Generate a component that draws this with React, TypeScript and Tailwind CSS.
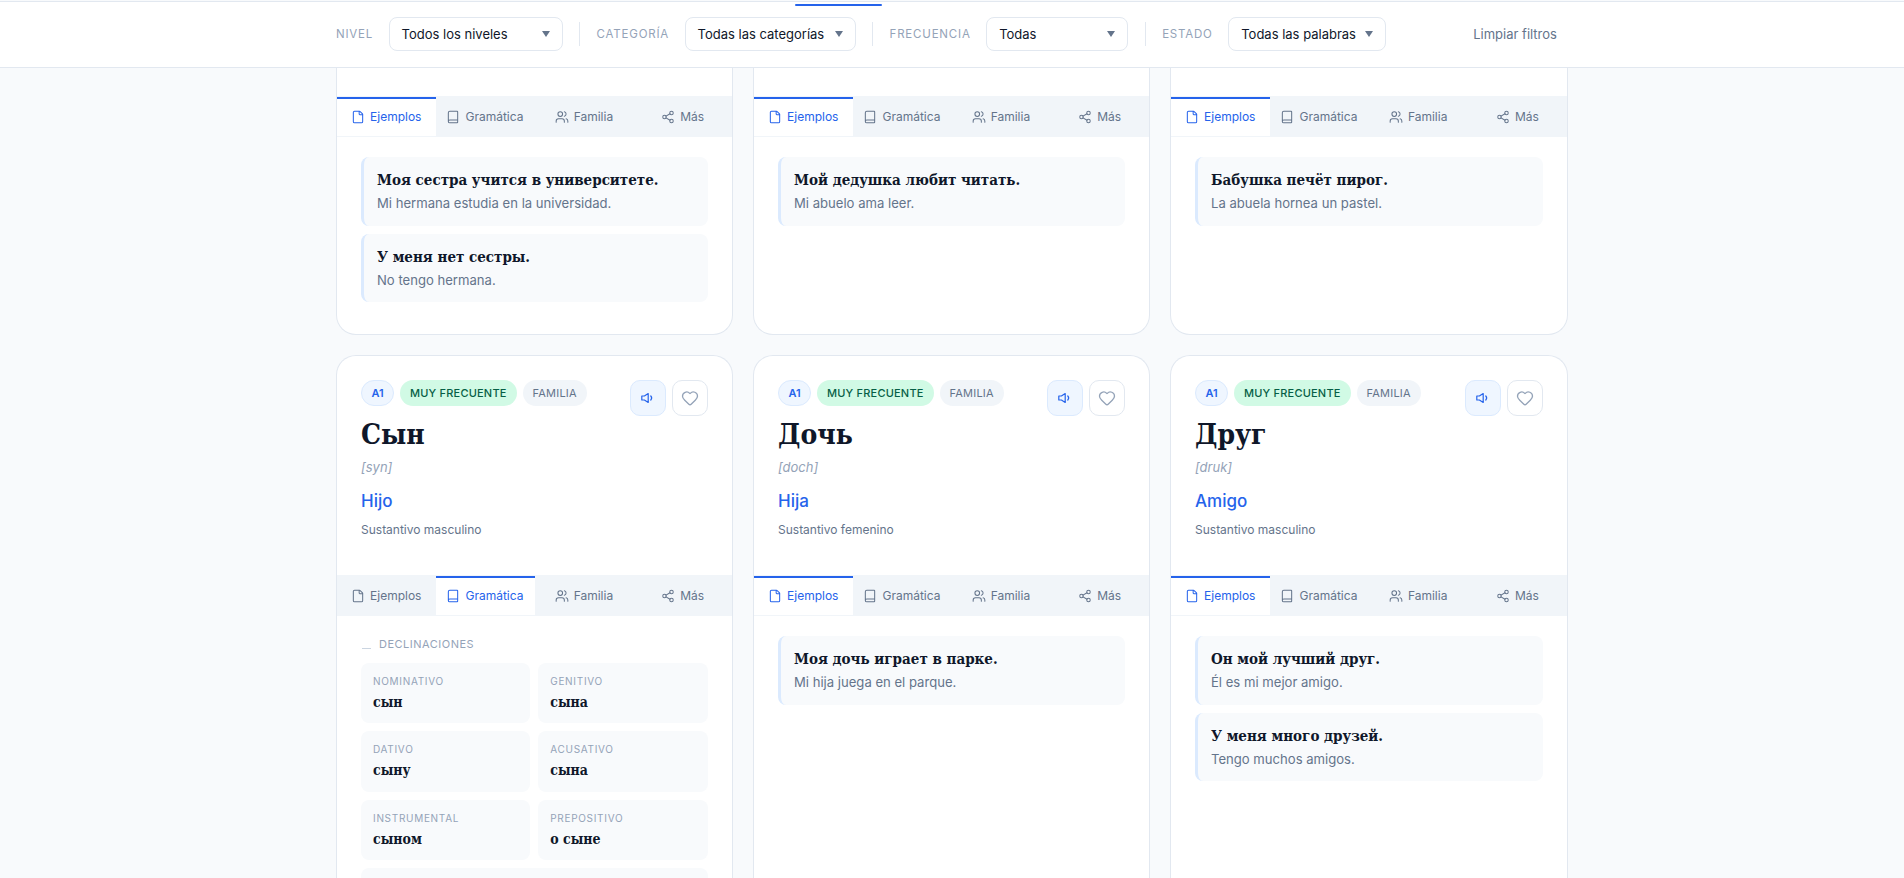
import { Book, File, Heart, Share2, Users } from "lucide-react";

const sans = "font-['Inter','Noto_Sans',sans-serif]";
const serif = "font-['DejaVu_Serif_Condensed','DejaVu_Serif',serif]";

const filters = [
  { label: "Nivel", value: "Todos los niveles", width: "w-[174px]" },
  { label: "Categoría", value: "Todas las categorías", width: "w-[171px]" },
  { label: "Frecuencia", value: "Todas", width: "w-[142px]" },
  { label: "Estado", value: "Todas las palabras", width: "w-[158px]" },
];

const tabs = [
  { name: "Ejemplos", icon: File },
  { name: "Gramática", icon: Book },
  { name: "Familia", icon: Users },
  { name: "Más", icon: Share2 },
];

const topCards = [
  [
    { ru: "Моя сестра учится в университете.", es: "Mi hermana estudia en la universidad." },
    { ru: "У меня нет сестры.", es: "No tengo hermana." },
  ],
  [{ ru: "Мой дедушка любит читать.", es: "Mi abuelo ama leer." }],
  [{ ru: "Бабушка печёт пирог.", es: "La abuela hornea un pastel." }],
];

const words = [
  {
    word: "Сын",
    pron: "[syn]",
    meaning: "Hijo",
    kind: "Sustantivo masculino",
    tab: "Gramática",
    examples: [],
  },
  {
    word: "Дочь",
    pron: "[doch]",
    meaning: "Hija",
    kind: "Sustantivo femenino",
    tab: "Ejemplos",
    examples: [{ ru: "Моя дочь играет в парке.", es: "Mi hija juega en el parque." }],
  },
  {
    word: "Друг",
    pron: "[druk]",
    meaning: "Amigo",
    kind: "Sustantivo masculino",
    tab: "Ejemplos",
    examples: [
      { ru: "Он мой лучший друг.", es: "Él es mi mejor amigo." },
      { ru: "У меня много друзей.", es: "Tengo muchos amigos." },
    ],
  },
];

const cases = [
  ["Nominativo", "сын"],
  ["Genitivo", "сына"],
  ["Dativo", "сыну"],
  ["Acusativo", "сына"],
  ["Instrumental", "сыном"],
  ["Prepositivo", "о сыне"],
];

function SpeakerIcon() {
  return (
    <svg width="14" height="12" viewBox="0 0 14 12" fill="none" stroke="currentColor" strokeWidth="1.2" strokeLinejoin="round" strokeLinecap="round">
      <path d="M0.8 4h2.6L7.2 1.6v8.8L3.4 8H0.8z" />
      <path d="M9.8 4a3 3 0 0 1 0 4" />
    </svg>
  );
}

function FilterBar() {
  return (
    <header className="relative z-10 mt-px h-[67px] shrink-0 border-b border-t border-[#e2e8f0] bg-white">
      <div className="absolute left-[795px] top-[2px] h-[2px] w-[87px] rounded-full bg-[#2563eb]" />
      <div className="ml-[336px] flex h-full items-center pb-px">
        {filters.map((f, i) => (
          <div key={f.label} className="flex items-center">
            {i > 0 && <div className="mx-[16.5px] h-6 w-px bg-[#e2e8f0]" />}
            <span className="mr-[15.5px] pt-px text-[11.5px] uppercase tracking-[0.8px] text-[#94a3b8]">{f.label}</span>
            <div className={`flex h-[34px] items-center justify-between rounded-lg border border-[#e2e8f0] bg-white pl-[12px] pr-[12px] text-[13px] text-[#0f172a] ${f.width}`}>
              <span className="whitespace-nowrap pt-px">{f.value}</span>
              <svg width="8" height="6" viewBox="0 0 8 6" className="shrink-0">
                <polygon points="0,0 8,0 4,6" fill="#64748b" />
              </svg>
            </div>
          </div>
        ))}
        <button className="ml-[87px] pt-px text-[13px] text-[#64748b]">Limpiar filtros</button>
      </div>
    </header>
  );
}

function TabStrip({ active }: { active: string }) {
  return (
    <div className="grid h-[41px] shrink-0 grid-cols-[98.5px_99px_1fr_1fr] border-b border-[#f1f5f9] bg-[#f1f5f9] pt-px">
      {tabs.map((t) => {
        const on = t.name === active;
        const Icon = t.icon;
        return (
          <div
            key={t.name}
            className={`flex items-center justify-center gap-[5px] border-t-2 pb-px text-[12px] ${
              on ? "border-[#2563eb] bg-white text-[#2563eb]" : "border-transparent text-[#64748b]"
            }`}
          >
            <Icon size={14} strokeWidth={1.75} />
            <span>{t.name}</span>
          </div>
        );
      })}
    </div>
  );
}

function Example({ ru, es }: { ru: string; es: string }) {
  return (
    <div className="flex h-[68.5px] flex-col justify-center rounded-lg border-l-[3px] border-[#dbeafe] bg-[#f8fafc] pb-px pl-[13px]">
      <p className={`${serif} text-[15px] font-bold leading-6 text-[#0f172a]`}>{ru}</p>
      <p className="mt-px text-[13.1px] leading-5 text-[#64748b]">{es}</p>
    </div>
  );
}

function Grammar() {
  return (
    <div className="px-6 pt-[20px]">
      <div className="mb-[10px] flex items-center gap-2 text-[11px] uppercase tracking-[0.5px] text-[#94a3b8]">
        <svg width="9" height="14" viewBox="0 0 9 14" className="ml-px">
          <path d="M0 11.5h9" stroke="#cbd5e1" strokeWidth="1" />
        </svg>
        <span>Declinaciones</span>
      </div>
      <div className="grid grid-cols-[169.25px_1fr] gap-2">
        {cases.map(([name, form]) => (
          <div key={name} className="h-[60.5px] rounded-lg bg-[#f8fafc] px-3 pt-[9px]">
            <p className="text-[10px] uppercase leading-[18px] tracking-[0.7px] text-[#94a3b8]">{name}</p>
            <p className={`${serif} mt-px text-[14px] font-bold leading-[22px] text-[#0f172a]`}>{form}</p>
          </div>
        ))}
        <div className="col-span-2 h-[60.5px] rounded-lg bg-[#f8fafc]" />
      </div>
    </div>
  );
}

function WordCard({ w }: { w: (typeof words)[number] }) {
  return (
    <article className="flex h-[560px] flex-col rounded-t-[20px] border border-b-0 border-[#e2e8f0] bg-white">
      <div className="h-[219px] shrink-0 px-6 pt-6">
        <div className="flex items-start justify-between">
          <div className="flex gap-[6px] text-[11px] uppercase">
            <span className="flex h-[26px] w-[33px] items-center justify-center rounded-full border border-[#dbeafe] bg-[#eff6ff] font-semibold text-[#2563eb]">A1</span>
            <span className="flex h-[26px] items-center rounded-full bg-[#d1fae5] px-[10px] font-medium tracking-[0.2px] text-[#065f46]">Muy frecuente</span>
            <span className="flex h-[26px] items-center rounded-full bg-[#f1f5f9] px-[10px] tracking-[0.2px] text-[#64748b]">Familia</span>
          </div>
          <div className="flex gap-[6px]">
            <button className="flex h-9 w-9 items-center justify-center rounded-[10px] border border-[#dbeafe] bg-[#eff6ff] text-[#2563eb]">
              <SpeakerIcon />
            </button>
            <button className="flex h-9 w-9 items-center justify-center rounded-[10px] border border-[#e2e8f0] bg-white text-[#94a3b8]">
              <Heart size={18} strokeWidth={1.75} />
            </button>
          </div>
        </div>
        <h2 className={`${serif} -mt-px text-[28px] font-bold leading-10 text-[#0f172a]`}>{w.word}</h2>
        <p className="mt-[2px] text-[13px] italic leading-5 text-[#94a3b8]">{w.pron}</p>
        <p className="mt-[12px] text-[17px] font-medium leading-6 text-[#2563eb]">{w.meaning}</p>
        <p className="mt-[7px] text-[12px] leading-5 text-[#64748b]">{w.kind}</p>
      </div>
      <TabStrip active={w.tab} />
      {w.tab === "Gramática" ? (
        <Grammar />
      ) : (
        <div className="flex flex-col gap-2 px-6 pt-[20px]">
          {w.examples.map((e) => (
            <Example key={e.ru} ru={e.ru} es={e.es} />
          ))}
        </div>
      )}
    </article>
  );
}

export default function App() {
  return (
    <div className={`${sans} flex h-[878px] w-[1904px] flex-col overflow-hidden bg-[#f8fafc]`}>
      <FilterBar />
      <main className="ml-[336px] w-[1232px]">
        <div className="grid grid-cols-[397px_397px_398px] gap-5">
          {topCards.map((examples, i) => (
            <article key={i} className="h-[267px] rounded-b-[20px] border border-t-0 border-[#e2e8f0] bg-white pt-[28px]">
              <TabStrip active="Ejemplos" />
              <div className="flex flex-col gap-2 px-6 pt-[20px]">
                {examples.map((e) => (
                  <Example key={e.ru} ru={e.ru} es={e.es} />
                ))}
              </div>
            </article>
          ))}
        </div>
        <div className="mt-5 grid grid-cols-[397px_397px_398px] gap-5">
          {words.map((w) => (
            <WordCard key={w.word} w={w} />
          ))}
        </div>
      </main>
    </div>
  );
}
